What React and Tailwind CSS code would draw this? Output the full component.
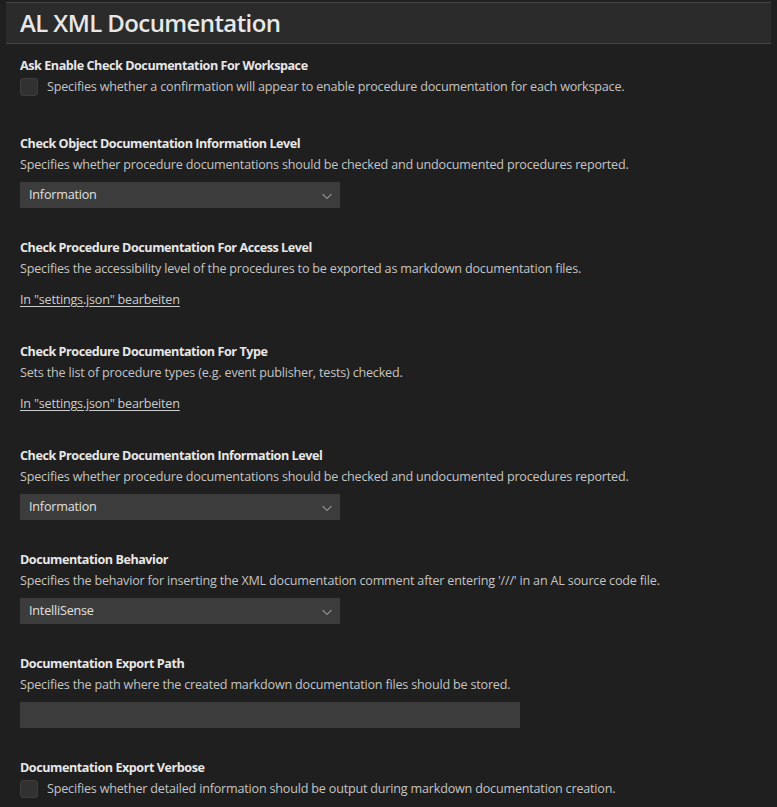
const font = { fontFamily: '"Open Sans", "Noto Sans", sans-serif' }

const Chevron = () => (
  <svg width="16" height="16" viewBox="0 0 16 16" fill="none" className="text-[#c5c5c5]">
    <path d="M3.5 6l4.5 4.5L12.5 6" stroke="currentColor" strokeWidth="1" />
  </svg>
)

const Title = ({ children }) => (
  <div className="h-[18px] text-[12.6px] font-bold leading-[20px] tracking-[-0.45px] text-[#e7e7e7]">{children}</div>
)

const Desc = ({ children }) => (
  <div className="mt-[3px] h-[18px] text-[12.6px] leading-[20px] tracking-[-0.2px] text-[#c4c4c4]">{children}</div>
)

const CheckSetting = ({ title, desc }) => (
  <div className="pb-[38px]">
    <Title>{title}</Title>
    <div className="mt-[4px] flex items-center gap-[9px]">
      <div className="h-[18px] w-[18px] shrink-0 rounded-[3px] border border-[#3c3c3c] bg-[#313131]" />
      <div className="text-[12.6px] leading-[18px] tracking-[-0.2px] text-[#c4c4c4]">{desc}</div>
    </div>
  </div>
)

const SelectSetting = ({ title, desc, value }) => (
  <div className="pb-[30px]">
    <Title>{title}</Title>
    <Desc>{desc}</Desc>
    <div className="mt-[9px] flex h-[26px] w-[320px] items-center justify-between bg-[#3c3c3c] pl-[9px] pr-[5px] pt-[1px] text-[12.6px] tracking-[-0.2px] text-[#e0e0e0]">
      <span>{value}</span>
      <Chevron />
    </div>
  </div>
)

const LinkSetting = ({ title, desc }) => (
  <div className="pb-[33px]">
    <Title>{title}</Title>
    <Desc>{desc}</Desc>
    <div className="mt-[14px] text-[12.6px] leading-[18px] tracking-[-0.2px]">
      <span className="text-[#cccccc] underline underline-offset-2">In "settings.json" bearbeiten</span>
    </div>
  </div>
)

const InputSetting = ({ title, desc }) => (
  <div className="pb-[30px]">
    <Title>{title}</Title>
    <Desc>{desc}</Desc>
    <div className="mt-[9px] h-[26px] w-[500px] bg-[#3c3c3c]" />
  </div>
)

export default function App() {
  return (
    <div className="h-[807px] overflow-hidden bg-[#1f1f1f] px-[6px] pt-[2px]" style={font}>
      <div className="flex h-[42px] items-center border-y border-[#454545] bg-[#2b2b2b] pl-[14px]">
        <h1 className="text-[24px] font-semibold leading-none tracking-[-0.6px] text-[#e7e7e7]">AL XML Documentation</h1>
      </div>
      <div className="pl-[14px] pt-[12px]">
        <CheckSetting
          title="Ask Enable Check Documentation For Workspace"
          desc="Specifies whether a confirmation will appear to enable procedure documentation for each workspace."
        />
        <SelectSetting
          title="Check Object Documentation Information Level"
          desc="Specifies whether procedure documentations should be checked and undocumented procedures reported."
          value="Information"
        />
        <LinkSetting
          title="Check Procedure Documentation For Access Level"
          desc="Specifies the accessibility level of the procedures to be exported as markdown documentation files."
        />
        <LinkSetting
          title="Check Procedure Documentation For Type"
          desc="Sets the list of procedure types (e.g. event publisher, tests) checked."
        />
        <SelectSetting
          title="Check Procedure Documentation Information Level"
          desc="Specifies whether procedure documentations should be checked and undocumented procedures reported."
          value="Information"
        />
        <SelectSetting
          title="Documentation Behavior"
          desc="Specifies the behavior for inserting the XML documentation comment after entering '///' in an AL source code file."
          value="IntelliSense"
        />
        <InputSetting
          title="Documentation Export Path"
          desc="Specifies the path where the created markdown documentation files should be stored."
        />
        <CheckSetting
          title="Documentation Export Verbose"
          desc="Specifies whether detailed information should be output during markdown documentation creation."
        />
      </div>
    </div>
  )
}
